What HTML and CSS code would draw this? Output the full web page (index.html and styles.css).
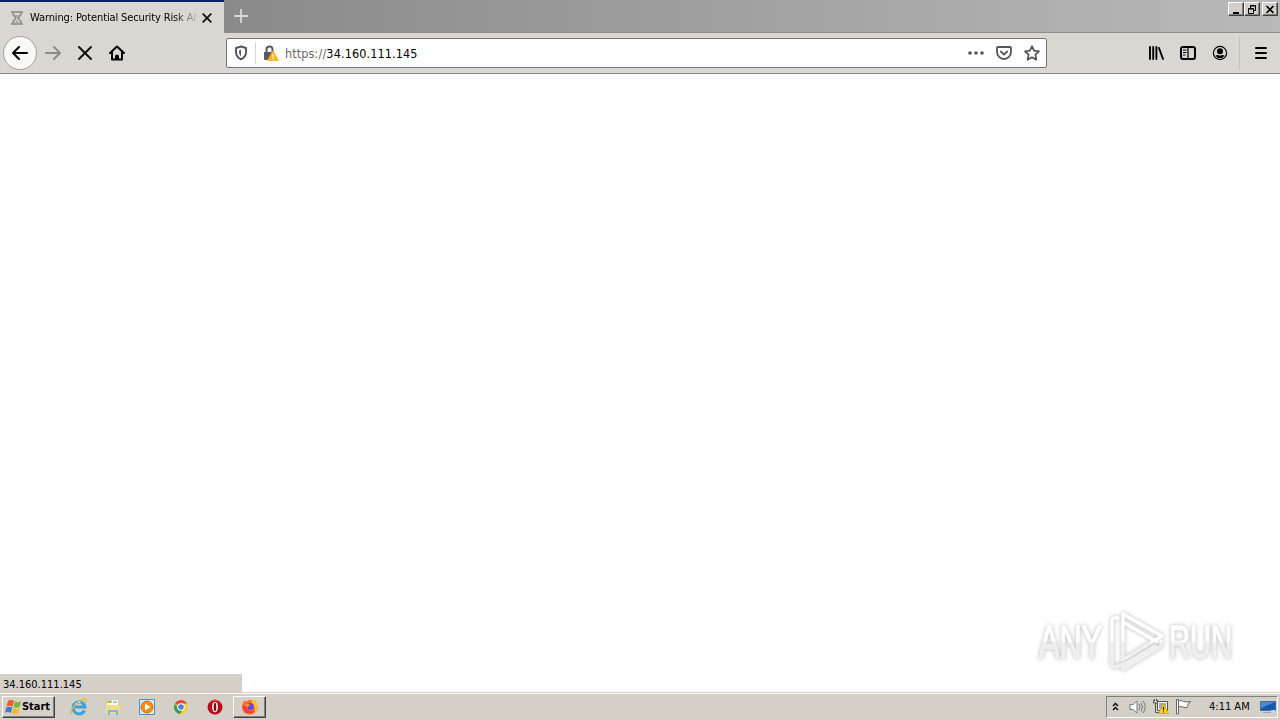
FILE: index.html
```html
<!DOCTYPE html>
<html lang="en">
<head>
    <meta charset="UTF-8">
    <title>Warning: Potential Security Risk Ahead</title>
    <link rel="stylesheet" href="styles.css">
</head>
<body>
    <header class="tab-bar">
        <div class="tab">
            <svg class="tab-icon" width="14" height="14" viewBox="0 0 14 14" fill="none" stroke="#888" stroke-width="1.5">
                <path d="M1 1h12M1 13h12M3 1v2.5L6 7l-3 3.5V13M11 1v2.5L8 7l3 3.5V13"/>
                <path d="M4.5 4h5L7 7zM4 12l3-3 3 3z" fill="#aaa" stroke="none"/>
            </svg>
            <span class="tab-title">Warning: Potential Security Risk Ahead</span>
            <svg class="tab-close" width="10" height="10" viewBox="0 0 10 10" stroke="#111" stroke-width="1.8"><path d="M.7.7l8.6 8.6M9.3.7L.7 9.3"/></svg>
        </div>
        <svg class="new-tab" width="14" height="14" viewBox="0 0 14 14" stroke="#d8d8d8" stroke-width="1.8"><path d="M7 0v14M0 7h14"/></svg>
        <div class="window-controls">
            <button class="control"><svg width="12" height="11" viewBox="0 0 12 11"><path d="M3 8h6v2H3z"/></svg></button>
            <button class="control"><svg width="12" height="11" viewBox="0 0 12 11" fill="none" stroke="#000"><path d="M4.5 4V1.5h5v5H8M4 2h6M2.5 4.5h5v5h-5zM2 5h6"/></svg></button>
            <button class="control close"><svg width="12" height="11" viewBox="0 0 12 11" stroke="#000" stroke-width="1.6"><path d="M2.5 2l7 7M9.5 2l-7 7"/></svg></button>
        </div>
    </header>

    <nav class="toolbar">
        <div class="nav-buttons">
            <button class="back"><svg width="16" height="16" viewBox="0 0 16 16" fill="none" stroke="#000" stroke-width="2" stroke-linecap="round" stroke-linejoin="round"><path d="M15 8H1.5M7 2L1 8l6 6"/></svg></button>
            <button class="nav-btn"><svg width="16" height="16" viewBox="0 0 16 16" fill="none" stroke="#8c8a87" stroke-width="1.8" stroke-linecap="round" stroke-linejoin="round"><path d="M1 8h13.5M9 2l6 6-6 6"/></svg></button>
            <button class="nav-btn"><svg width="16" height="16" viewBox="0 0 16 16" stroke="#111" stroke-width="2" stroke-linecap="round"><path d="M2 2l12 12M14 2L2 14"/></svg></button>
            <button class="nav-btn"><svg width="16" height="16" viewBox="0 0 16 16" fill="none" stroke="#000" stroke-width="2" stroke-linecap="round" stroke-linejoin="round"><path d="M1 8l7-6.5L15 8M3 7v7.5h10V7"/><path d="M6 15v-3.5q0-2 2-2t2 2V15z" fill="#000" stroke="none"/></svg></button>
        </div>
        <div class="url-bar">
            <svg class="shield" width="14" height="16" viewBox="0 0 14 16" fill="none" stroke="#555" stroke-width="1.9" stroke-linejoin="round"><path d="M7 1.5l5 1.5v4c0 4-2 6-5 7.3C4 13 2 11 2 7V3z"/><path d="M7 4.8v6.4C5.4 10 5 8.5 5 5.4z" fill="#555" stroke="none"/></svg>
            <span class="url-separator"></span>
            <svg class="lock" width="16" height="16" viewBox="0 0 16 16"><path d="M3.5 8V4.5a3 3 0 0 1 6 0V7" fill="none" stroke="#5b5b62" stroke-width="2"/><path d="M1 7h9v8H2q-1 0-1-1z" fill="#5b5b62"/><path d="M10 6l5.3 9.3H4.7z" fill="#ffb31a" stroke="#ffb31a" stroke-linejoin="round"/><path d="M9.4 9h1.2v3.3H9.4zM9.4 13.2h1.2v1.2H9.4z" fill="#fff"/></svg>
            <span class="url"><span class="scheme">https://</span>34.160.111.145</span>
            <div class="page-actions">
                <svg width="16" height="16" viewBox="0 0 16 16" fill="#555"><circle cx="2" cy="8" r="1.8"/><circle cx="8" cy="8" r="1.8"/><circle cx="14" cy="8" r="1.8"/></svg>
                <svg width="16" height="16" viewBox="0 0 16 16" fill="none" stroke="#555" stroke-width="1.8" stroke-linecap="round" stroke-linejoin="round"><path d="M2 2h12q1 0 1 1v4a7 7 0 0 1-14 0V3q0-1 1-1z"/><path d="M4.8 6.5L8 9.5l3.2-3"/></svg>
                <svg width="16" height="16" viewBox="0 0 16 16" fill="none" stroke="#555" stroke-width="1.8" stroke-linejoin="round"><path d="M8 1.3l2.1 4.4 4.8.6-3.5 3.4.9 5L8 12.3l-4.3 2.4.9-5L1.1 6.3l4.8-.6z"/></svg>
            </div>
        </div>
        <div class="tools">
            <svg width="16" height="16" viewBox="0 0 16 16" stroke="#000" stroke-width="1.9" stroke-linecap="round"><path d="M2 2v12M5.2 2v12M8.4 2v12M11 3l4 11"/></svg>
            <svg width="16" height="16" viewBox="0 0 16 16" fill="none" stroke="#000" stroke-width="2"><rect x="1" y="2" width="14" height="12" rx="2"/><path d="M8 2v12M3 5h3.5M3 7.5h3.5M3 10h2.5" stroke-width="1.2"/></svg>
            <svg width="16" height="16" viewBox="0 0 16 16"><circle cx="8" cy="8" r="6.6" fill="none" stroke="#000" stroke-width="1.2"/><circle cx="8" cy="6.3" r="3"/><path d="M3.5 10.5q2.2-1.3 4.5.2 2.3-1.5 4.5-.2Q11 13.3 8 13.3t-4.5-2.8z"/></svg>
        </div>
        <div class="menu"><svg width="12" height="12" viewBox="0 0 12 12" stroke="#000" stroke-width="2" stroke-linecap="round"><path d="M1 1h10M1 6h10M1 11h10"/></svg></div>
    </nav>

    <main class="page">
        <svg class="watermark" width="210" height="76" viewBox="0 0 210 76">
            <defs>
                <linearGradient id="fade" gradientUnits="userSpaceOnUse" x1="0" y1="6" x2="0" y2="70">
                    <stop offset="50%" stop-color="#fff"/>
                    <stop offset="53%" stop-color="#efefef"/>
                </linearGradient>
            </defs>
            <g class="wm-text">
                <text x="9" y="55" textLength="63" lengthAdjust="spacingAndGlyphs">ANY</text>
                <text x="139" y="55" textLength="63" lengthAdjust="spacingAndGlyphs">RUN</text>
            </g>
            <g class="wm-logo">
                <path d="M88 15h-3q-3 0-3 3v43q0 4 5 2"/>
                <path d="M93 57V11l39 22-39 24M93 19l34 20M88 63l6-2M93 66l38-23v-5M93 66v-4l32-19"/>
            </g>
        </svg>
        <div class="status">34.160.111.145</div>
    </main>

    <footer class="taskbar">
        <button class="start">
            <svg width="17" height="16" viewBox="0 0 17 16"><path d="M3 2q3-2 6 0L7.5 7.5Q5 6 1.5 7.5z" fill="#ef5a28"/><path d="M10 2.5q3 1.5 6-.3L14.5 8q-3 1.5-6 0z" fill="#72b83b"/><path d="M1.3 8.6q3-1.5 6 0L5.8 14q-3-2-6 0z" fill="#397fcc"/><path d="M8.3 9q3 1.7 6 .2l-1.5 5.6q-3 1-6-.6z" fill="#f9ba20"/></svg>
            <span>Start</span>
        </button>
        <div class="quick-launch">
            <svg width="18" height="18" viewBox="0 0 18 18" fill="none"><path d="M14.5 12.5A6 6 0 1 1 15 9H5" stroke="#35a4df" stroke-width="3"/><path d="M2 15C-1 18 1 10 7 5s11-5 8 0" stroke="#e4b83a" stroke-width="1.3"/><path d="M5 6q3-3 6-1" stroke="#a5e4fc"/></svg>
            <svg width="18" height="18" viewBox="0 0 18 18"><path d="M2 3h5l1 2h8v10H2z" fill="#e8c766"/><path d="M3 5h5V2h6v9H3z" fill="#f4fafa"/><path d="M4 4h3M9 4h4" stroke="#57b56a"/><path d="M2 7h14v8H2z" fill="#f3dc84"/><path d="M4 17v-5h10v5h-2v-3H6v3z" fill="#72bde5"/></svg>
            <svg width="18" height="18" viewBox="0 0 18 18"><path d="M1.5 1.5h15v15h-15z" fill="#d6eaf7" stroke="#4b91c7"/><circle cx="9" cy="9" r="6" fill="#f58a16" stroke="#d8760d"/><path d="M7 5.5l5.5 3.5L7 12.5z" fill="#fff"/></svg>
            <svg width="18" height="18" viewBox="0 0 18 18"><circle cx="9" cy="9" r="7" fill="#f8cf35"/><path d="M9 9L3 5.4A7 7 0 0 1 15 5.5H9z" fill="#dd493d"/><path d="M2.8 5.7A7 7 0 0 0 8 16l3-5-5-1z" fill="#32a15b"/><circle cx="9" cy="9" r="3.8" fill="#fff"/><circle cx="9" cy="9" r="2.8" fill="#4689df"/></svg>
            <svg width="18" height="18" viewBox="0 0 18 18"><circle cx="9" cy="9" r="7.5" fill="#b80d16"/><path d="M3 5q6-6 12 0" stroke="#ed6970" fill="none"/><ellipse cx="9" cy="9" rx="2.9" ry="5.3" fill="#fff"/><ellipse cx="9" cy="9" rx="1.3" ry="4.3" fill="#8c0710"/></svg>
        </div>
        <button class="task">
            <svg width="18" height="18" viewBox="0 0 18 18"><path d="M2 5l2-3 1 2q3-3 6-2l3 1q4 4 2.5 8A8 8 0 0 1 1 10q0-3 1-5z" fill="#ff6a24"/><path d="M10 1q7 3 6.8 8.5Q16 14 12 16q3-4 1-8-3-3-3-7z" fill="#ffc52b"/><path d="M1.3 8q.7 6.5 7 7.5 4 0 6-3-5 2-8-1-2-2 0-4z" fill="#f23c48"/><circle cx="9.5" cy="8.5" r="3.4" fill="#7542d5"/><path d="M4 7q3-2 5 0L6.5 9z" fill="#ff9c25"/></svg>
        </button>
        <div class="tray">
            <svg class="chevrons" width="7" height="9" viewBox="0 0 7 9" fill="none" stroke="#000" stroke-width="1.4"><path d="M1 4l2.5-2.5L6 4M1 8l2.5-2.5L6 8"/></svg>
            <svg class="speaker" width="17" height="16" viewBox="0 0 17 16" fill="none" stroke="#777"><path d="M1 5.5h3L8 2v12l-4-3.5H1z" fill="#fff"/><path d="M10 5q2 3 0 6M12 3.5q3 4.5 0 9M14 2q4.5 6 0 12"/></svg>
            <svg class="network" width="17" height="17" viewBox="0 0 17 17"><path d="M5.5 3.5h10v9h-10z" fill="#f4f4f4" stroke="#555"/><path d="M7 5h7v6H7z" fill="#aaa"/><path d="M1.5 2v3h4V2M3.5 5v9.5H8M2.5 1v2M4.5 1v2" fill="none" stroke="#555"/><path d="M11.5 6l5 9.5h-10z" fill="#ffd51c" stroke="#d39b00" stroke-width=".7"/><path d="M11.5 9v3.2M11.5 13.2v1.2" stroke="#222" stroke-width="1.2"/></svg>
            <svg class="flag" width="17" height="17" viewBox="0 0 17 17" fill="#fff" stroke="#666"><path d="M1.5 16V1.5h2V16z"/><path d="M3.5 3q3-1.5 5 .5 3 1 7 0l-2.5 3-1 3q-2 .8-4-.5-2-1-4.5 0z"/></svg>
            <span class="clock">4:11 AM</span>
            <svg class="desktop" width="16" height="14" viewBox="0 0 16 14"><path d="M.5 1.5h15v9H.5z" fill="#1758ac" stroke="#456e9f"/><path d="M1 2h14L1 8z" fill="#478bd3"/><path d="M3 12.5h8" stroke="#8fa5bc"/><path d="M11 10h4v3h-4z" fill="#bcd2e9"/></svg>
        </div>
    </footer>
</body>
</html>
```

FILE: styles.css
```css
* {
    margin: 0;
    padding: 0;
    box-sizing: border-box;
}

body {
    width: 1280px;
    height: 720px;
    display: flex;
    flex-direction: column;
    overflow: hidden;
    background: #fff;
    color: #000;
    font-family: Tahoma, 'DejaVu Sans Condensed', 'DejaVu Sans', sans-serif;
    font-size: 11px;
}

svg {
    display: block;
    flex-shrink: 0;
}

button {
    border: none;
    background: none;
    display: flex;
    align-items: center;
    justify-content: center;
    font: inherit;
}

/* tabs */
.tab-bar {
    height: 33px;
    display: flex;
    align-items: flex-start;
    background: linear-gradient(to right, #808080, #b9b9b9);
    border-bottom: 1px solid #8f8e8b;
}

.tab {
    width: 224px;
    height: 33px;
    display: flex;
    align-items: center;
    padding: 0 12px 0 10px;
    background: #dad7d2;
    border-top: 2px solid #0a246a;
}

.tab-title {
    width: 167px;
    margin-left: 6px;
    overflow: hidden;
    white-space: nowrap;
    font-stretch: condensed;
    letter-spacing: -0.13px;
    -webkit-mask-image: linear-gradient(to right, #000 144px, transparent 169px);
    mask-image: linear-gradient(to right, #000 144px, transparent 169px);
}

.tab-close {
    margin-left: 5px;
}

.new-tab {
    margin: 9px 0 0 10px;
}

.window-controls {
    display: flex;
    margin: 2px 2px 0 auto;
}

.control {
    width: 16px;
    height: 14px;
    background: #d4d0c8;
    border: 1px solid;
    border-color: #fff #404040 #404040 #fff;
    box-shadow: inset -1px -1px #808080;
}

.control.close {
    margin-left: 2px;
}

/* toolbar */
.toolbar {
    height: 41px;
    display: flex;
    align-items: center;
    background: #dad7d2;
    border-bottom: 1px solid #888682;
}

.nav-buttons {
    width: 226px;
    display: flex;
    align-items: center;
    padding-left: 3px;
}

.back {
    width: 34px;
    height: 34px;
    border: 1px solid #a3a19d;
    border-radius: 50%;
    background: #f9f9f8;
}

.nav-btn {
    width: 32px;
    height: 32px;
}

.url-bar {
    width: 821px;
    height: 30px;
    display: flex;
    align-items: center;
    padding: 0 6px 0 7px;
    background: #fff;
    border: 1px solid #77756f;
    border-radius: 2px;
}

.url-separator {
    width: 1px;
    height: 22px;
    margin: 0 7px;
    background: #d4d4d4;
}

.url {
    margin-left: 6px;
    font-size: 12.5px;
    font-stretch: condensed;
    letter-spacing: 0.13px;
    white-space: nowrap;
}

.scheme {
    color: #686868;
}

.page-actions {
    display: flex;
    gap: 12px;
    margin-left: auto;
}

.tools {
    display: flex;
    gap: 16px;
    margin-left: 101px;
}

.menu {
    height: 34px;
    display: flex;
    align-items: center;
    margin-left: 11px;
    padding-left: 15px;
    border-left: 1px solid #c6c3be;
}

/* page */
.page {
    flex: 1;
    position: relative;
}

.status {
    position: absolute;
    left: 0;
    bottom: 0;
    width: 242px;
    height: 18px;
    padding-left: 3px;
    background: #d4d0c8;
    line-height: 21px;
}

.watermark {
    position: absolute;
    left: 1030px;
    top: 529px;
    overflow: visible;
    filter: drop-shadow(0 0 2px rgba(0, 0, 0, 0.28));
}

.wm-text {
    font-family: 'Liberation Sans', sans-serif;
    font-size: 46px;
    fill: url(#fade);
    stroke: url(#fade);
    stroke-width: 1.5;
}

.wm-logo {
    fill: none;
    stroke: url(#fade);
    stroke-width: 3.5;
    stroke-linecap: round;
    stroke-linejoin: round;
}

/* taskbar */
.taskbar {
    height: 28px;
    display: flex;
    align-items: center;
    padding: 2px;
    background: #d4d0c8;
    border-top: 1px solid #d4d0c8;
    box-shadow: inset 0 1px #fff;
}

.start {
    width: 53px;
    height: 22px;
    border: 1px solid;
    border-color: #fff #404040 #404040 #fff;
    box-shadow: inset -1px -1px #808080;
    font-weight: bold;
    font-stretch: condensed;
}

.start span {
    margin-right: 2px;
}

.quick-launch {
    display: flex;
    gap: 16px;
    margin-left: 15px;
}

.task {
    width: 33px;
    height: 22px;
    margin-left: 9px;
    border: 1px solid;
    border-color: #fff #404040 #404040 #fff;
    box-shadow: inset -1px -1px #808080;
}

.tray {
    width: 172px;
    height: 22px;
    display: flex;
    align-items: center;
    margin-left: auto;
    padding-left: 5px;
    border: 1px solid;
    border-color: #808080 #fff #fff #808080;
}

.speaker {
    margin-left: 10px;
}

.network,
.flag {
    margin-left: 6px;
}

.clock {
    margin-left: 17px;
    white-space: nowrap;
}

.desktop {
    margin-left: auto;
    margin-right: 1px;
}
```
